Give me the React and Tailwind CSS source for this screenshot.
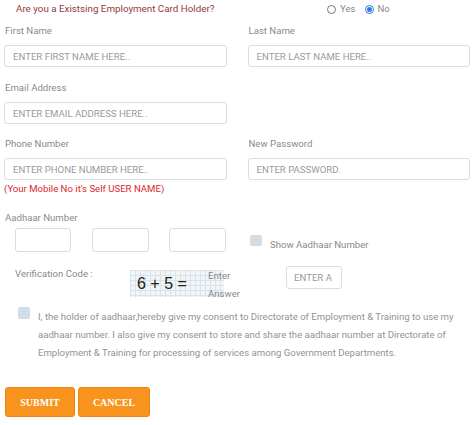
import React, { useState } from "react";

const inputCls =
  "w-full h-[22px] border border-[#dcdcdc] rounded-[3px] px-[8px] text-[9.6px] text-[#555] placeholder:text-[#9a9a9a] outline-none bg-white";

function Field({ label, placeholder }) {
  return (
    <div>
      <div className="h-[14px] leading-[14px] text-[9.6px] text-[#8a8a8a] pl-[1px]">{label}</div>
      <input className={"mt-[7px] " + inputCls} placeholder={placeholder} />
    </div>
  );
}

function Captcha() {
  return (
    <div
      className="w-[94px] h-[27px] bg-[#f1f5f8] flex items-center pl-[7px] overflow-hidden"
      style={{
        backgroundImage:
          "linear-gradient(#dbe3ea 1px, transparent 1px), linear-gradient(90deg, #dbe3ea 1px, transparent 1px)",
        backgroundSize: "5px 5px",
      }}
    >
      <span className="text-[16px] leading-none text-[#222] font-['Liberation_Sans',sans-serif]">6 + 5 =</span>
    </div>
  );
}

function Radio({ checked, onClick, label, className = "" }) {
  return (
    <label className={"flex items-center gap-[4px] " + className} onClick={onClick}>
      <span
        className={
          "w-[9px] h-[9px] rounded-full border flex items-center justify-center " +
          (checked ? "border-[#2f7de1]" : "border-[#777]")
        }
      >
        {checked && <span className="w-[5px] h-[5px] rounded-full bg-[#2f7de1]" />}
      </span>
      {label}
    </label>
  );
}

export default function App() {
  const [existing, setExisting] = useState("no");

  return (
    <div className="w-[474px] h-[425px] bg-white font-['Roboto',sans-serif] overflow-hidden">
      {/* header question */}
      <div className="h-[19px] flex items-center px-[4px]">
        <div className="w-[320px] pl-[12px] text-[9.8px] text-[#933a40]">
          Are you a Existsing Employment Card Holder?
        </div>
        <div className="flex items-center text-[9.6px] text-[#8a8a8a]">
          <Radio checked={existing === "yes"} onClick={() => setExisting("yes")} label="Yes" className="ml-[3px]" />
          <Radio checked={existing === "no"} onClick={() => setExisting("no")} label="No" className="ml-[9px]" />
        </div>
      </div>

      <div className="px-[4px]">
        <div className="grid grid-cols-2 gap-x-[21px] mt-[5px]">
          <Field label="First Name" placeholder="ENTER FIRST NAME HERE.." />
          <Field label="Last Name" placeholder="ENTER LAST NAME HERE.." />
        </div>

        <div className="grid grid-cols-2 gap-x-[21px] mt-[14px]">
          <Field label="Email Address" placeholder="ENTER EMAIL ADDRESS HERE.." />
        </div>

        <div className="grid grid-cols-2 gap-x-[21px] mt-[13px]">
          <div>
            <Field label="Phone Number" placeholder="ENTER PHONE NUMBER HERE.." />
            <div className="h-[16px] leading-[16px] mt-[1px] text-[9.6px] text-[#e0262b]">
              (Your Mobile No it's Self USER NAME)
            </div>
          </div>
          <Field label="New Password" placeholder="ENTER PASSWORD." />
        </div>

        <div className="mt-[14px] h-[14px] leading-[14px] text-[9.6px] text-[#8a8a8a] pl-[1px]">
          Aadhaar Number
        </div>
        <div className="flex items-start mt-[3px] pl-[11px]">
          <input className="w-[56px] h-[24px] border border-[#dcdcdc] rounded-[3px]" />
          <input className="w-[57px] h-[24px] border border-[#dcdcdc] rounded-[3px] ml-[21px]" />
          <input className="w-[57px] h-[24px] border border-[#dcdcdc] rounded-[3px] ml-[20px]" />
          <div className="ml-[24px] mt-[7px] w-[12px] h-[11px] rounded-[2px] bg-[#d3dde6]" />
          <div className="ml-[8px] mt-[10px] text-[9.6px] text-[#8a8a8a] leading-[13px]">Show Aadhaar Number</div>
        </div>

        {/* verification */}
        <div className="flex items-start mt-[14px] pl-[11px] h-[32px]">
          <div className="w-[115px] text-[9.6px] leading-[14px] text-[#8a8a8a] mt-[1px]">Verification Code :</div>
          <div className="relative mt-[4px]">
            <Captcha />
            <div className="absolute left-[78px] top-[-3px] text-[9.6px] leading-[18px] text-[#8a8a8a]">
              Enter
              <br />
              Answer
            </div>
          </div>
          <input
            className="ml-[62px] w-[56px] h-[23px] border border-[#dcdcdc] rounded-[3px] px-[7px] text-[9.6px] placeholder:text-[#9a9a9a] outline-none"
            placeholder="ENTER A"
          />
        </div>

        {/* consent */}
        <div className="flex items-start mt-[9px]">
          <div className="ml-[14px] w-[12px] h-[12px] rounded-[2px] bg-[#d3dde6] shrink-0" />
          <p className="ml-[8px] mt-[1px] text-[9.6px] leading-[18px] text-[#939393] pr-[8px]">
            I, the holder of aadhaar,hereby give my consent to Directorate of Employment &amp; Training to use my
            aadhaar number. I also give my consent to store and share the aadhaar number at Directorate of
            Employment &amp; Training for processing of services among Government Departments.
          </p>
        </div>

        {/* buttons */}
        <div className="flex gap-[3px] mt-[25px] pl-[1px]">
          <button className="w-[70px] h-[30px] bg-[#f8941d] border border-[#e98612] rounded-[3px] text-white text-[10px] font-semibold font-['Liberation_Serif',serif]">
            SUBMIT
          </button>
          <button className="w-[72px] h-[30px] bg-[#f8941d] border border-[#e98612] rounded-[3px] text-white text-[10px] font-semibold font-['Liberation_Serif',serif]">
            CANCEL
          </button>
        </div>
      </div>
    </div>
  );
}
